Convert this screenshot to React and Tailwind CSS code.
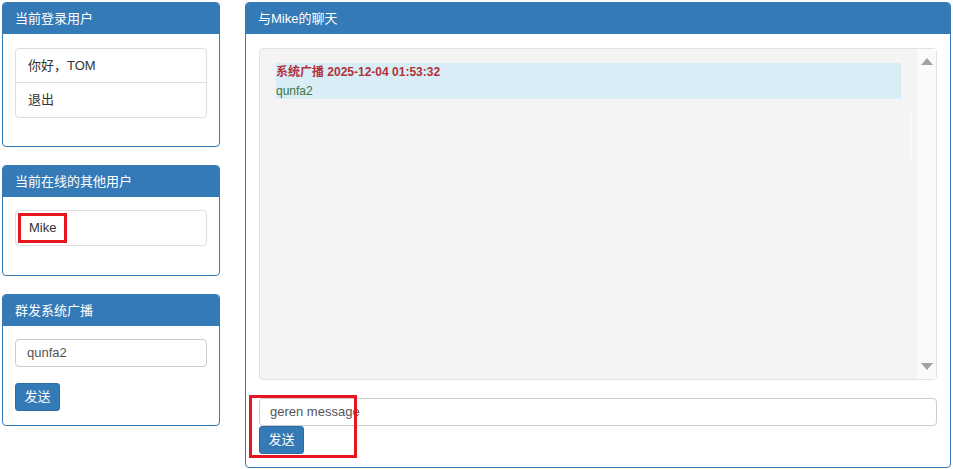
import React from "react";

const font = { fontFamily: '"Liberation Sans", Arial, "Noto Sans CJK SC", sans-serif' };

function Panel({ title, children, className = "" }) {
  return (
    <div className={"border border-[#337ab7] rounded-[4px] bg-white overflow-hidden " + className}>
      <div className="bg-[#337ab7] h-[31px] px-[12px] flex items-center text-white text-[13px]">{title}</div>
      {children}
    </div>
  );
}

export default function App() {
  return (
    <div className="w-[953px] h-[469px] bg-white text-[#333] text-[13px] flex items-start pt-[2px] pl-[2px]" style={font}>
      <div className="w-[218px] flex flex-col gap-[18px]">
        <Panel title="当前登录用户">
          <div className="px-[12px] pt-[14px] pb-[28px]">
            <div className="border border-[#ddd] rounded-[4px]">
              <div className="h-[34px] flex items-center px-[12px] border-b border-[#ddd]">你好，TOM</div>
              <div className="h-[34px] flex items-center px-[12px]">退出</div>
            </div>
          </div>
        </Panel>
        <Panel title="当前在线的其他用户">
          <div className="px-[12px] pt-[13px] pb-[29px]">
            <div className="border border-[#ddd] rounded-[4px] h-[36px] flex items-center px-[2px]">
              <span className="border-[3px] border-[#e5161f] h-[30px] w-[49px] flex items-center pl-[8px]">Mike</span>
            </div>
          </div>
        </Panel>
        <Panel title="群发系统广播">
          <div className="px-[12px] pt-[13px] pb-[14px]">
            <div className="border border-[#ccc] rounded-[4px] h-[28px] flex items-center px-[11px] text-[#555]">qunfa2</div>
            <button className="mt-[16px] h-[28px] w-[45px] bg-[#337ab7] border border-[#2e6da4] rounded-[3px] text-white text-[13px]">发送</button>
          </div>
        </Panel>
      </div>
      <div className="ml-[25px] w-[706px]">
        <Panel title="与Mike的聊天">
          <div className="px-[13px] pt-[14px] pb-[13px]">
            <div className="h-[332px] border border-[#e3e3e3] rounded-[4px] bg-[#f4f4f4] flex relative">
              <div className="flex-1 pt-[14px] px-[16px]">
                <div className="bg-[#d9edf7] h-[36px] flex flex-col">
                  <div className="text-[12px] font-bold text-[#b0333a] leading-[17px] mt-[1px]">系统广播 2025-12-04 01:53:32</div>
                  <div className="text-[12px] text-[#3c763d] leading-[19px] mt-[1px]">qunfa2</div>
                </div>
              </div>
              <div className="absolute left-[650px] top-[63px] w-[1px] h-[50px] bg-white" />
              <div className="w-[19px] bg-[#fafafa] flex flex-col justify-between items-center py-[9px]">
                <svg width="12" height="7" viewBox="0 0 12 7"><polygon points="0,7 6,0 12,7" fill="#a3a3a3" /></svg>
                <svg width="12" height="7" viewBox="0 0 12 7"><polygon points="0,0 12,0 6,7" fill="#a3a3a3" /></svg>
              </div>
            </div>
            <div className="relative mt-[18px]">
              <div className="border border-[#ccc] rounded-[4px] h-[28px] flex items-center px-[10px] text-[#555]">geren message</div>
              <button className="h-[28px] w-[45px] bg-[#337ab7] border border-[#2e6da4] rounded-[3px] text-white text-[13px]">发送</button>
              <div className="absolute left-[-10px] top-[-3px] w-[108px] h-[63px] border-[3px] border-[#e5161f] pointer-events-none" />
            </div>
          </div>
        </Panel>
      </div>
    </div>
  );
}
